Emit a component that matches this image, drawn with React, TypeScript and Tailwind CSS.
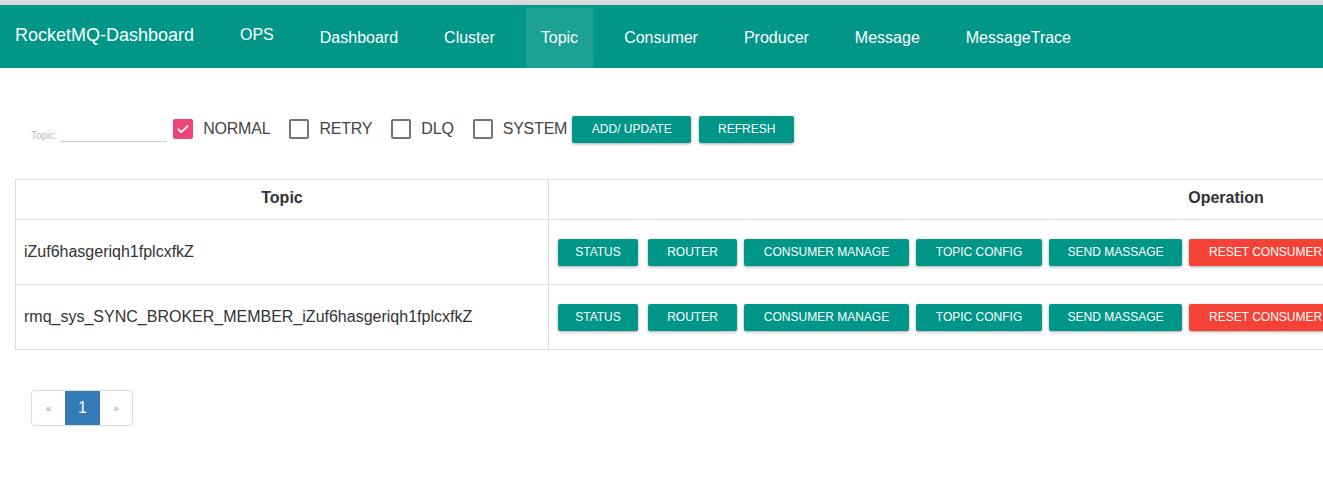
import React from 'react';

const navItems = ['Dashboard', 'Cluster', 'Topic', 'Consumer', 'Producer', 'Message', 'MessageTrace'];

const topics = ['iZuf6hasgeriqh1fplcxfkZ', 'rmq_sys_SYNC_BROKER_MEMBER_iZuf6hasgeriqh1fplcxfkZ'];

const ops = [
  { label: 'STATUS', w: 'w-[80px]' },
  { label: 'ROUTER', w: 'w-[89px]' },
  { label: 'CONSUMER MANAGE', w: 'w-[165px]' },
  { label: 'TOPIC CONFIG', w: 'w-[126px]' },
  { label: 'SEND MASSAGE', w: 'w-[133px]' },
];

function Check({ label, checked }: { label: string; checked?: boolean }) {
  return (
    <label className="flex items-center mr-[19px]">
      {checked ? (
        <span className="w-[20px] h-[20px] rounded-[2px] bg-[#ee4479] flex items-center justify-center">
          <svg width="14" height="14" viewBox="0 0 24 24" fill="none" stroke="white" strokeWidth="3" strokeLinecap="round" strokeLinejoin="round">
            <path d="M4 12.5l5 5L20 7" />
          </svg>
        </span>
      ) : (
        <span className="w-[20px] h-[20px] rounded-[2px] border-2 border-[#757575] bg-white" />
      )}
      <span className="ml-[10px] text-[16px] text-[#444] tracking-[-0.2px]">{label}</span>
    </label>
  );
}

export default function App() {
  return (
    <div className="w-[1323px] h-[484px] overflow-hidden bg-white font-['Liberation_Sans','Roboto',sans-serif]">
      <div className="h-[5px] bg-[#d9d9d9]" />
      {/* navbar */}
      <div className="h-[63px] bg-[#009688] flex items-stretch gap-4 text-white">
        <div className="shrink-0 whitespace-nowrap pl-[15px] pr-[15px] text-[18px] pt-[17px] w-[209px]">RocketMQ-Dashboard</div>
        <div className="px-[15px] text-[16px] pt-[18px]">OPS</div>
        {navItems.map((n) => (
          <div
            key={n}
            className={
              n === 'Topic'
                ? 'px-[15px] text-[16px] pt-[18px] mt-[3px] bg-[#1ba294]'
                : 'px-[15px] text-[16px] pt-[21px]'
            }
          >
            {n}
          </div>
        ))}
      </div>

      {/* filter */}
      <div className="flex items-center mt-[47px] h-[28px]">
        <div className="flex items-end pl-[31px] pt-[12px]">
          <span className="text-[10px] text-[#b8b8b8] mr-[4px] leading-[12px]">Topic:</span>
          <span className="w-[106px] border-b border-[#ccc] h-[14px]" />
        </div>
        <div className="flex items-center ml-[6px]">
          <Check label="NORMAL" checked />
          <Check label="RETRY" />
          <Check label="DLQ" />
          <Check label="SYSTEM" />
        </div>
        <button className="-ml-[14px] w-[119px] h-[27px] bg-[#009688] text-white text-[12px] rounded-[2px] shadow-[0_1px_3px_rgba(0,0,0,0.35)]">
          ADD/ UPDATE
        </button>
        <button className="ml-[8px] w-[95px] h-[27px] bg-[#009688] text-white text-[12px] rounded-[2px] shadow-[0_1px_3px_rgba(0,0,0,0.35)]">
          REFRESH
        </button>
      </div>

      {/* table */}
      <table className="ml-[15px] mt-[36px] w-[1889px] border-collapse border border-[#ddd] text-[#333]">
        <thead>
          <tr className="h-[40px]">
            <th className="w-[533px] border border-[#ddd] text-[16px] font-bold pb-[3px]">Topic</th>
            <th className="border border-[#ddd] text-[16px] font-bold pb-[3px]">Operation</th>
          </tr>
        </thead>
        <tbody>
          {topics.map((t) => (
            <tr key={t} className="h-[65px]">
              <td className="border border-[#ddd] px-[8px] text-[16px]">{t}</td>
              <td className="border border-[#ddd] px-[8px]">
                <div className="flex items-center gap-[7px] pl-[1px]">
                  {ops.map((o, i) => (
                    <button
                      key={o.label}
                      className={`${o.w} ${i === 1 ? 'ml-[3px]' : ''} h-[27px] bg-[#009688] text-white text-[12px] rounded-[2px] shadow-[0_1px_3px_rgba(0,0,0,0.35)]`}
                    >
                      {o.label}
                    </button>
                  ))}
                  <button className="shrink-0 w-[200px] h-[27px] bg-[#f44336] text-white text-[12px] rounded-[2px] shadow-[0_1px_3px_rgba(0,0,0,0.35)] text-left pl-[20px]">
                    RESET CONSUMER
                  </button>
                </div>
              </td>
            </tr>
          ))}
        </tbody>
      </table>

      {/* pagination */}
      <div className="ml-[31px] mt-[40px] flex h-[36px] w-[102px] border border-[#ddd] rounded-[4px] overflow-hidden">
        <div className="w-[33px] flex items-center justify-center text-[10px] text-[#999]">«</div>
        <div className="w-[35px] flex items-center justify-center bg-[#337ab7] text-white text-[16px]">1</div>
        <div className="flex-1 flex items-center justify-center text-[10px] text-[#999]">»</div>
      </div>
    </div>
  );
}
